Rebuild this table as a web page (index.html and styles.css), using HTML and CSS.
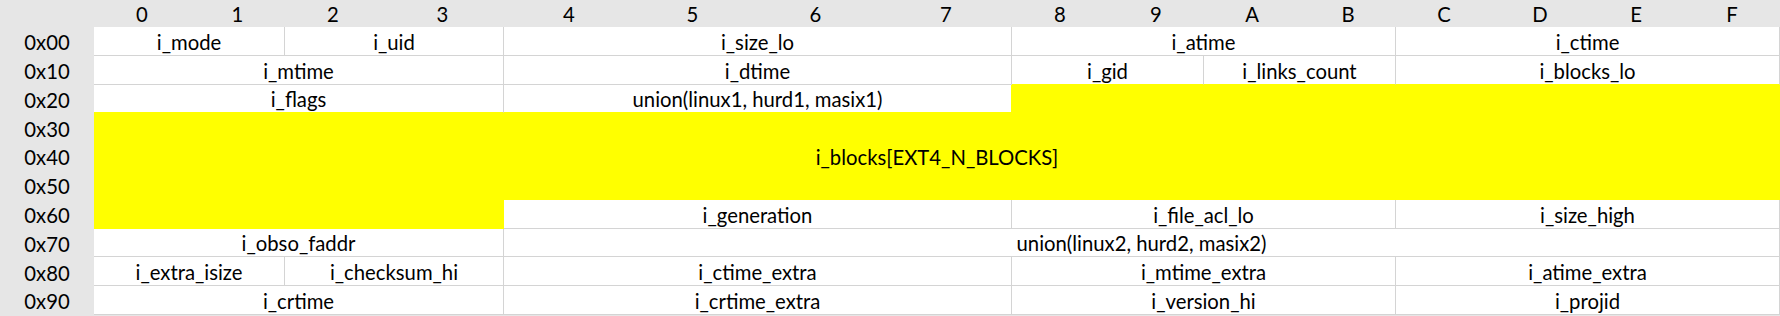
FILE: index.html
```html
<!DOCTYPE html>
<html>
<head>
<meta charset="utf-8">
<link rel="stylesheet" href="styles.css">
</head>
<body>
<div class="sheet">
  <div class="corner"></div>
  <div class="h">0</div><div class="h">1</div><div class="h">2</div><div class="h">3</div>
  <div class="h">4</div><div class="h">5</div><div class="h">6</div><div class="h">7</div>
  <div class="h">8</div><div class="h">9</div><div class="h">A</div><div class="h">B</div>
  <div class="h">C</div><div class="h">D</div><div class="h">E</div><div class="h">F</div>

  <div class="rl">0x00</div>
  <div class="c s2">i_mode</div>
  <div class="c s2">i_uid</div>
  <div class="c s4">i_size_lo</div>
  <div class="c s4">i_atime</div>
  <div class="c s4">i_ctime</div>

  <div class="rl">0x10</div>
  <div class="c s4">i_mtime</div>
  <div class="c s4">i_dtime</div>
  <div class="c s2 by">i_gid</div>
  <div class="c s2 by">i_links_count</div>
  <div class="c s4 by">i_blocks_lo</div>

  <div class="rl">0x20</div>
  <div class="c s4 by">i_flags</div>
  <div class="c s4 by ry">union(linux1, hurd1, masix1)</div>
  <div class="y s8"></div>

  <div class="rl">0x30</div>
  <div class="y blocks">i_blocks[EXT4_N_BLOCKS]</div>
  <div class="rl">0x40</div>
  <div class="rl">0x50</div>

  <div class="rl">0x60</div>
  <div class="y s4"></div>
  <div class="c s4">i_generation</div>
  <div class="c s4">i_file_acl_lo</div>
  <div class="c s4">i_size_high</div>

  <div class="rl">0x70</div>
  <div class="c s4">i_obso_faddr</div>
  <div class="c s12">union(linux2, hurd2, masix2)</div>

  <div class="rl">0x80</div>
  <div class="c s2">i_extra_isize</div>
  <div class="c s2">i_checksum_hi</div>
  <div class="c s4">i_ctime_extra</div>
  <div class="c s4">i_mtime_extra</div>
  <div class="c s4">i_atime_extra</div>

  <div class="rl">0x90</div>
  <div class="c s4">i_crtime</div>
  <div class="c s4">i_crtime_extra</div>
  <div class="c s4">i_version_hi</div>
  <div class="c s4">i_projid</div>
</div>
</body>
</html>
```

FILE: styles.css
```css
html, body {
  margin: 0;
  padding: 0;
  background: #e6e6e6;
}

.sheet {
  display: grid;
  grid-template-columns: 94px 96px 95px 96px 123px 130px 117px 129px 132px repeat(8, 96px);
  grid-template-rows: 27px repeat(10, 28.8px);
  width: 1780px;
  font-family: "Lato", "Open Sans", sans-serif;
  font-size: 20.3px;
  color: #000;
  line-height: 1;
}

.h, .rl {
  display: flex;
  align-items: center;
  justify-content: center;
  padding-top: 2px;
}

.c {
  background: #fff;
  border-right: 1px solid #d4d4d4;
  border-bottom: 1px solid #d4d4d4;
  display: flex;
  align-items: center;
  justify-content: center;
  padding-top: 2px;
  white-space: nowrap;
  overflow: hidden;
}

.by { border-bottom-color: #ffff00; }
.ry { border-right-color: #ffff00; }

.y {
  background: #ffff00;
}

.s2 { grid-column: span 2; }
.s4 { grid-column: span 4; }
.s8 { grid-column: span 8; }
.s12 { grid-column: span 12; }

.blocks {
  grid-column: span 16;
  grid-row: span 3;
  display: flex;
  align-items: center;
  justify-content: center;
  padding-top: 2px;
}
```
